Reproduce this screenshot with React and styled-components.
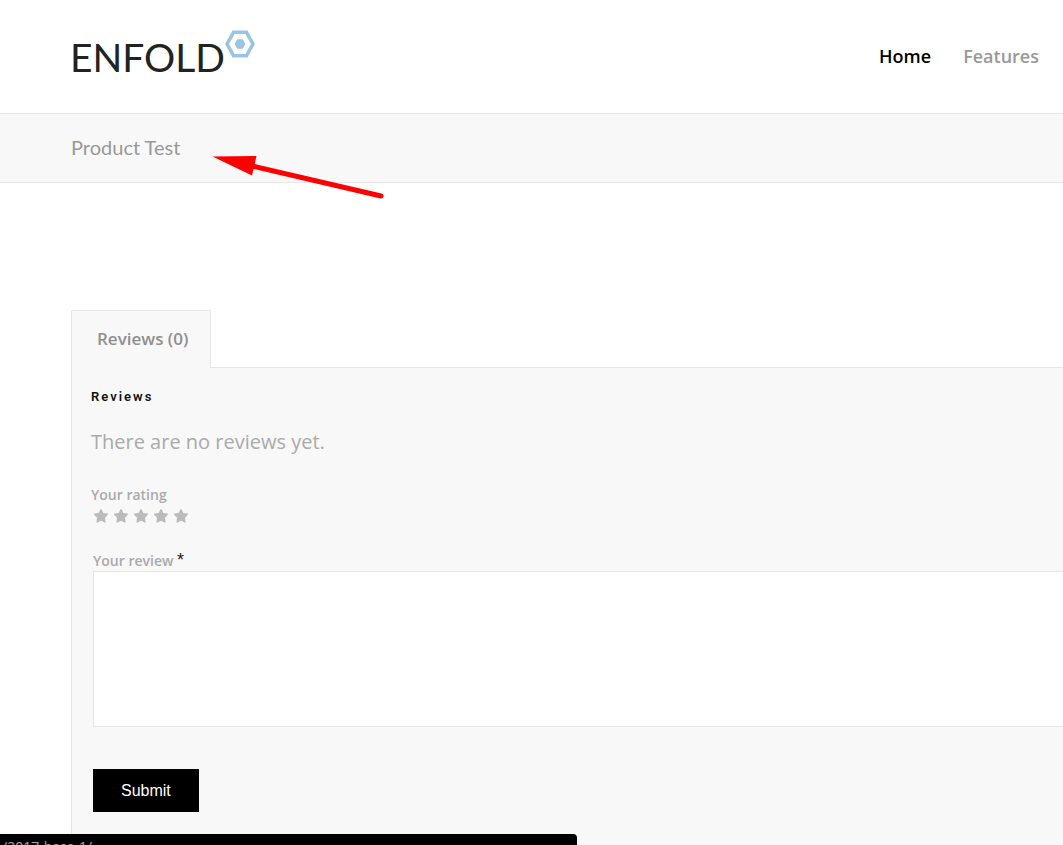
import React, { useState } from "react";
import styled, { createGlobalStyle } from "styled-components";

const GlobalStyle = createGlobalStyle`
  *,
  *::before,
  *::after {
    box-sizing: border-box;
  }
  html,
  body {
    margin: 0;
    height: 100%;
    overflow: hidden;
    background: #fff;
  }
  body {
    font-family: "Open Sans", "Liberation Sans", sans-serif;
    color: #999;
  }
  h1,
  h2,
  p {
    margin: 0;
    font-weight: 400;
  }
`;

const Header = styled.header`
  display: flex;
  align-items: center;
  justify-content: space-between;
  height: 114px;
  padding: 0 24px 2px 70px;
  border-bottom: 1px solid #e6e6e6;
`;

const Logo = styled.a`
  display: flex;
  align-items: flex-start;
  padding-top: 2px;
  color: #222;
  font-family: Lato, sans-serif;
  font-size: 39px;
  font-weight: 400;
  line-height: 54px;
  text-decoration: none;
`;

const Nav = styled.nav`
  display: flex;
  gap: 32px;
`;

const NavLink = styled.a`
  color: ${(props) => (props.$active ? "#000" : "#999")};
  font-size: 18px;
  font-weight: 600;
  line-height: 24px;
  text-decoration: none;
`;

const TitleBar = styled.div`
  position: relative;
  padding: 19px 71px 21px;
  background: #f8f8f8;
  border-bottom: 1px solid #e6e6e6;
`;

const Title = styled.h1`
  color: #999;
  font-family: Lato, sans-serif;
  font-size: 20px;
  line-height: 28px;
`;

// the arrow lies over the title bar and the page below it
const Arrow = styled.svg`
  position: absolute;
  top: 36px;
  left: 208px;
  pointer-events: none;
`;

const Main = styled.main`
  padding: 127px 0 0 71px;
`;

const Tab = styled.button`
  position: relative;
  display: block;
  height: 58px;
  margin-bottom: -1px;
  padding: 0 22px 2px 25px;
  background: #f8f8f8;
  border: 1px solid #e6e6e6;
  border-bottom: 0;
  border-radius: 2px 2px 0 0;
  color: #8f8f8f;
  font-family: inherit;
  font-size: 17px;
  font-weight: 600;
`;

const Panel = styled.section`
  min-height: 500px;
  padding: 19px 0 40px 19px;
  background: #f8f8f8;
  border: 1px solid #e6e6e6;
  border-right: 0;
`;

const Heading = styled.h2`
  margin-bottom: 20px;
  color: #111;
  font-family: Roboto, "Liberation Sans", sans-serif;
  font-size: 13px;
  font-weight: 600;
  letter-spacing: 2px;
  line-height: 20px;
`;

const Empty = styled.p`
  margin-bottom: 28px;
  color: #aaa;
  font-size: 20px;
  line-height: 30px;
`;

const Field = styled.div`
  padding-left: 2px;
`;

const Label = styled.label`
  color: #aaa;
  font-size: 14px;
  font-weight: 600;
  line-height: 20px;
`;

const Rating = styled.fieldset`
  margin: 0 0 22px;
  padding: 0;
  border: 0;
`;

const RatingLabel = styled.legend`
  padding: 0;
  color: #aaa;
  font-size: 14px;
  font-weight: 600;
  line-height: 20px;
`;

const Stars = styled.div`
  display: flex;
`;

const StarLabel = styled.label`
  position: relative;
  display: flex;
  align-items: center;
  justify-content: center;
  width: 20px;
  height: 22px;
  cursor: pointer;
  input {
    position: absolute;
    inset: 0;
    margin: 0;
    opacity: 0;
  }
`;

const Required = styled.span`
  color: #222;
  font-family: "Liberation Sans", Arial, sans-serif;
  font-size: 18px;
  font-weight: 400;
  line-height: 20px;
`;

const TextArea = styled.textarea`
  display: block;
  width: calc(100% + 20px);
  height: 156px;
  margin-bottom: 42px;
  padding: 12px;
  background: #fff;
  border: 1px solid #e6e6e6;
  font: inherit;
  outline: 0;
  resize: none;
`;

const Submit = styled.button`
  padding: 12px 28px;
  background: #000;
  border: 0;
  color: #fff;
  font-family: "Liberation Sans", Arial, sans-serif;
  font-size: 16px;
  line-height: 19px;
`;

const StatusBar = styled.div`
  position: fixed;
  bottom: 0;
  left: 0;
  width: 577px;
  height: 11px;
  padding: 4px 2px 0;
  overflow: hidden;
  background: #000;
  border-top-right-radius: 4px;
  color: #aaa;
  font-size: 14px;
  line-height: 18px;
`;

function Star({ filled }) {
  return (
    <svg width="14" height="14" viewBox="0 0 14 14" aria-hidden="true">
      <path
        d="M7 .8 8.9 4.6 13.3 5.2 10.2 8.4 10.9 12.9 7 10.9 3.1 12.9 3.8 8.4 .7 5.2 5.1 4.6Z"
        fill={filled ? "#777" : "#bbb"}
        stroke={filled ? "#777" : "#bbb"}
        strokeWidth="1.4"
        strokeLinejoin="round"
      />
    </svg>
  );
}

function App() {
  const [rating, setRating] = useState(0);
  const [review, setReview] = useState("");

  return (
    <>
      <GlobalStyle />
      <Header>
        <Logo href="#">
          ENFOLD
          <svg width="30" height="28" viewBox="0 0 30 28" aria-hidden="true">
            <path
              d="M8.5 2.3H21.5L28 14 21.5 25.7H8.5L2 14Z"
              fill="none"
              stroke="#9bc3e2"
              strokeWidth="3.6"
            />
            <path d="M12.2 9.2H17.8L20.4 14 17.8 18.8H12.2L9.6 14Z" fill="#9bc3e2" />
          </svg>
        </Logo>
        <Nav>
          <NavLink href="#" $active>
            Home
          </NavLink>
          <NavLink href="#">Features</NavLink>
        </Nav>
      </Header>
      <TitleBar>
        <Title>Product Test</Title>
        <Arrow width="180" height="52" viewBox="0 0 180 52" aria-hidden="true">
          <path d="M46 16.5 173 46" stroke="#f00" strokeWidth="5" strokeLinecap="round" />
          <path d="M4.5 6.5 48.5 6 44 25.5Z" fill="#f00" />
        </Arrow>
      </TitleBar>
      <Main>
        <Tab type="button">Reviews (0)</Tab>
        <Panel>
          <Heading>Reviews</Heading>
          <Empty>There are no reviews yet.</Empty>
          <form onSubmit={(e) => e.preventDefault()}>
            <Rating>
              <RatingLabel>Your rating</RatingLabel>
              <Stars>
                {[1, 2, 3, 4, 5].map((n) => (
                  <StarLabel key={n}>
                    <input
                      type="radio"
                      name="rating"
                      aria-label={`${n} of 5 stars`}
                      checked={rating === n}
                      onChange={() => setRating(n)}
                    />
                    <Star filled={n <= rating} />
                  </StarLabel>
                ))}
              </Stars>
            </Rating>
            <Field>
              <Label htmlFor="review">
                Your review <Required>*</Required>
              </Label>
              <TextArea
                id="review"
                value={review}
                onChange={(e) => setReview(e.target.value)}
              />
              <Submit type="submit">Submit</Submit>
            </Field>
          </form>
        </Panel>
      </Main>
      <StatusBar>/2017-base-1/</StatusBar>
    </>
  );
}

export default App;
